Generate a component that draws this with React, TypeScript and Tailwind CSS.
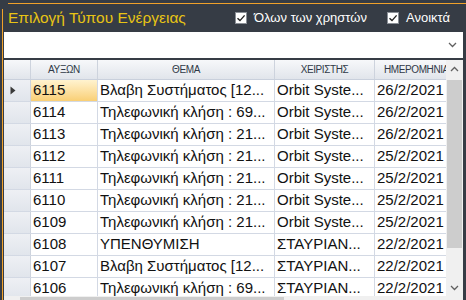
import React from 'react';

type Row = { id: string; subject: string; user: string; date: string };

const rows: Row[] = [
  { id: '6115', subject: 'Βλαβη Συστήματος [12...', user: 'Orbit Syste...', date: '26/2/2021' },
  { id: '6114', subject: 'Τηλεφωνική κλήση : 69...', user: 'Orbit Syste...', date: '26/2/2021' },
  { id: '6113', subject: 'Τηλεφωνική κλήση : 21...', user: 'Orbit Syste...', date: '26/2/2021' },
  { id: '6112', subject: 'Τηλεφωνική κλήση : 21...', user: 'Orbit Syste...', date: '25/2/2021' },
  { id: '6111', subject: 'Τηλεφωνική κλήση : 21...', user: 'Orbit Syste...', date: '25/2/2021' },
  { id: '6110', subject: 'Τηλεφωνική κλήση : 21...', user: 'Orbit Syste...', date: '25/2/2021' },
  { id: '6109', subject: 'Τηλεφωνική κλήση : 21...', user: 'Orbit Syste...', date: '25/2/2021' },
  { id: '6108', subject: 'ΥΠΕΝΘΥΜΙΣΗ', user: 'ΣΤΑΥΡΙΑΝ...', date: '22/2/2021' },
  { id: '6107', subject: 'Βλαβη Συστήματος [12...', user: 'ΣΤΑΥΡΙΑΝ...', date: '22/2/2021' },
  { id: '6106', subject: 'Τηλεφωνική κλήση : 69...', user: 'ΣΤΑΥΡΙΑΝ...', date: '22/2/2021' },
];

function CheckBox({ label }: { label: string }) {
  return (
    <label className="flex items-center gap-[7px] text-[13px] text-white">
      <span className="w-[12px] h-[12px] bg-white border border-[#8a8f96] flex items-center justify-center">
        <svg width="10" height="10" viewBox="0 0 10 10">
          <path d="M1.5 5.2 L4 7.6 L8.6 2.4" fill="none" stroke="#222" strokeWidth="1.4" />
        </svg>
      </span>
      <span>{label}</span>
    </label>
  );
}

function Chevron({ up = false }: { up?: boolean }) {
  return (
    <svg width="9" height="6" viewBox="0 0 9 6">
      <path
        d={up ? 'M1 5 L4.5 1.5 L8 5' : 'M1 1 L4.5 4.5 L8 1'}
        fill="none"
        stroke="#606060"
        strokeWidth="1.3"
      />
    </svg>
  );
}

export default function App() {
  return (
    <div
      className="w-[466px] h-[300px] overflow-hidden bg-[#363c45] flex flex-col"
      style={{ fontFamily: '"Liberation Sans", Arial, sans-serif' }}
    >
      {/* Top accent */}
      <div className="h-[3px] shrink-0"></div>
      <div className="ml-[8px] h-px shrink-0 bg-[#f0a12a]"></div>

      <div className="flex flex-1 min-h-0">
        {/* Left accent */}
        <div className="w-[2px]"></div>
        <div className="w-px mt-[5px] bg-[#f0a12a]"></div>
        <div className="w-px"></div>

        <div className="w-[459px] flex flex-col min-h-0">
          {/* Title bar */}
          <div className="h-[28px] shrink-0 flex items-center pl-[4px]">
            <span className="text-[15.5px] text-[#e8c414] w-[227px]">Επιλογή Τύπου Ενέργειας</span>
            <div className="w-[152px]">
              <CheckBox label="Όλων των χρηστών" />
            </div>
            <CheckBox label="Ανοικτά" />
          </div>

          {/* Combo */}
          <div className="h-[26px] shrink-0 bg-white flex items-center justify-end pr-[6px]">
            <Chevron />
          </div>
          <div className="h-[2px] shrink-0"></div>

          {/* Grid */}
          <div className="h-[253px] flex flex-col bg-white shrink-0">
            <div className="flex h-[236px] shrink-0">
              <div className="w-[442px] flex flex-col overflow-hidden">
                {/* Header */}
                <div className="flex h-[20px] shrink-0 bg-gradient-to-b from-[#f7f8fa] to-[#e1e5eb] border-b border-[#c9d0dc] text-[10px] text-[#2f3947] tracking-[-0.4px]">
                  <div className="w-[27px] border-r border-[#cdd3dd]"></div>
                  <div className="w-[67px] border-r border-[#cdd3dd] flex items-center justify-center">ΑΥΞΩΝ</div>
                  <div className="w-[177px] border-r border-[#cdd3dd] flex items-center justify-center">ΘΕΜΑ</div>
                  <div className="w-[100px] border-r border-[#cdd3dd] flex items-center justify-center">ΧΕΙΡΙΣΤΗΣ</div>
                  <div className="flex-1 flex items-center pl-[9px] whitespace-nowrap overflow-hidden">ΗΜΕΡΟΜΗΝΙΑ</div>
                </div>

                {/* Rows */}
                {rows.map((r, i) => (
                  <div key={r.id} className="flex h-[22px] shrink-0 border-b border-[#d3d9e4] text-[15px] text-[#111]">
                    <div className="w-[27px] border-r border-[#cdd3dd] bg-gradient-to-b from-[#eef0f4] to-[#e1e5ec] flex items-center pl-[6px]">
                      {i === 0 && (
                        <svg width="6" height="9" viewBox="0 0 6 9">
                          <path d="M0.5 0.5 L5.5 4.5 L0.5 8.5 Z" fill="#3a3a3a" />
                        </svg>
                      )}
                    </div>
                    <div
                      className={`w-[67px] border-r border-[#d3d9e4] flex items-center pl-[2px] ${
                        i === 0 ? 'bg-gradient-to-b from-[#fff3cf] to-[#f9cf74]' : ''
                      }`}
                    >
                      {r.id}
                    </div>
                    <div className="w-[177px] border-r border-[#d3d9e4] flex items-center pl-[2px] whitespace-nowrap overflow-hidden">
                      {r.subject}
                    </div>
                    <div className="w-[100px] border-r border-[#d3d9e4] flex items-center pl-[2px] whitespace-nowrap overflow-hidden">
                      {r.user}
                    </div>
                    <div className="flex-1 flex items-center pl-[2px] whitespace-nowrap overflow-hidden">{r.date}</div>
                  </div>
                ))}
              </div>

              {/* Vertical scrollbar */}
              <div className="w-[17px] bg-[#f0f0f0] flex flex-col">
                <div className="h-[17px] flex items-center justify-center">
                  <Chevron up />
                </div>
                <div className="h-[3px]"></div>
                <div className="h-[168px] mx-px bg-[#cdcdcd]"></div>
                <div className="flex-1"></div>
                <div className="h-[17px] flex items-center justify-center">
                  <Chevron />
                </div>
              </div>
            </div>

            {/* Horizontal scrollbar */}
            <div className="h-[17px] shrink-0 bg-[#f0f0f0] flex items-center">
              <div className="w-[16px]"></div>
              <div className="w-[264px] h-[15px] bg-[#cdcdcd]"></div>
            </div>
          </div>
        </div>
      </div>
    </div>
  );
}
